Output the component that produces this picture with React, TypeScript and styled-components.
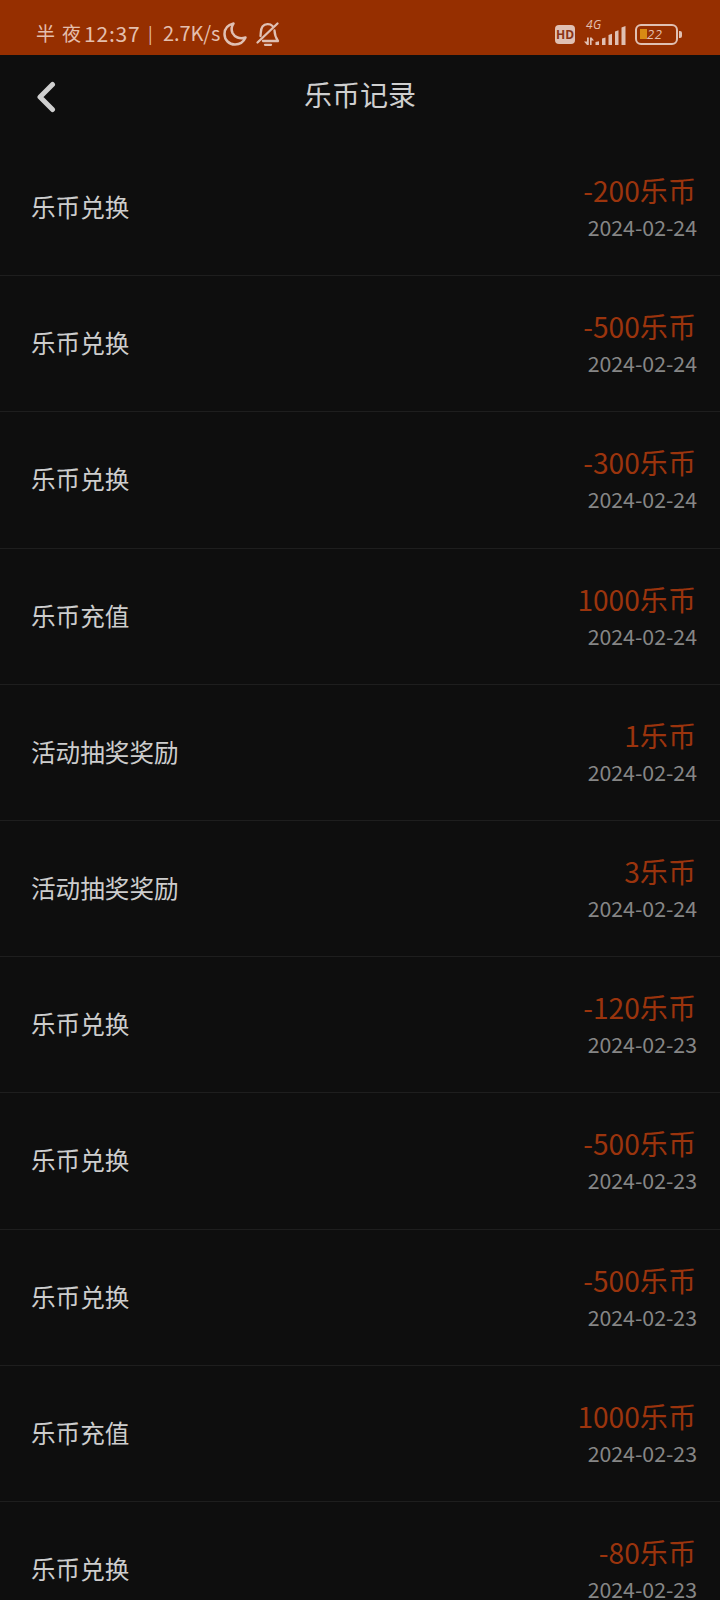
import React from 'react';
import styled, { createGlobalStyle } from 'styled-components';

const GlobalStyle = createGlobalStyle`
  * { box-sizing: border-box; }
  body {
    margin: 0;
    background: #0e0e0e;
    font-family: "Noto Sans CJK SC", sans-serif;
  }
`;

const Screen = styled.div`
  width: 720px;
  height: 1600px;
  overflow: hidden;
  background: #0e0e0e;
`;

const StatusBar = styled.header`
  display: flex;
  justify-content: space-between;
  height: 55px;
  padding: 13px 38px 0 36px;
  background: #962f00;
  color: #e4bfae;
`;

const StatusGroup = styled.div<{ $gap?: number }>`
  display: flex;
  align-items: center;
  gap: ${({ $gap = 0 }) => $gap}px;
  height: 42px;
`;

const StatusText = styled.span<{ $width: number; $size?: number; $spacing?: number }>`
  width: ${({ $width }) => $width}px;
  font-size: ${({ $size = 20 }) => $size}px;
  letter-spacing: ${({ $spacing = 0 }) => $spacing}px;
  line-height: 40px;
  height: 42px;
  white-space: nowrap;
  font-weight: 400;
`;

const StatusIcon = styled.svg`
  display: block;
  flex: none;
  overflow: visible;
`;

const HdBadge = styled.span`
  width: 20px;
  height: 19px;
  border-radius: 4px;
  background: #e0c0b3;
  color: #8a3313;
  font: 700 12px/20px "Open Sans", sans-serif;
  text-align: center;
`;

const Signal = styled.div`
  display: flex;
  flex-direction: column;
  width: 42px;
  height: 26px;
  margin-top: -6px;
`;

const NetworkType = styled.span`
  height: 8px;
  padding-left: 2px;
  font: italic 400 12px/14px "Open Sans", sans-serif;
  letter-spacing: 0.5px;
`;

const Battery = styled.div`
  display: flex;
  align-items: center;
`;

const BatteryBody = styled.div`
  display: flex;
  align-items: center;
  width: 43px;
  height: 21px;
  padding-left: 3px;
  border: 2px solid #e0c0b3;
  border-radius: 6px;
`;

const BatteryLevel = styled.i`
  width: 7px;
  height: 10px;
  background: #d88a14;
`;

const BatteryText = styled.span`
  font: italic 400 13px/15px "Open Sans", sans-serif;
  letter-spacing: 0.5px;
`;

const BatteryTip = styled.i`
  width: 3px;
  height: 7px;
  margin-left: 1px;
  border-radius: 0 2px 2px 0;
  background: #e0c0b3;
`;

const TitleBar = styled.div`
  display: grid;
  grid-template-columns: 72px 1fr 72px;
  align-items: center;
  height: 85px;
  padding-bottom: 8px;
`;

const BackButton = styled.button`
  display: flex;
  padding: 7px 0 0 36px;
  border: 0;
  background: none;
`;

const Title = styled.h1`
  margin: 0;
  color: #cfcfcf;
  font-size: 28px;
  line-height: 40px;
  font-weight: 400;
  text-align: center;
`;

const RecordList = styled.ul`
  margin: 0;
  padding: 0;
  list-style: none;
`;

const RecordRow = styled.li`
  display: flex;
  align-items: center;
  justify-content: space-between;
  height: 136.2px;
  padding: 0 23px 0 31px;
  border-bottom: 1px solid #1e1e1e;
`;

const RecordName = styled.span`
  padding-bottom: 3px;
  color: #cdcdcd;
  font-size: 24.6px;
  line-height: 36px;
`;

const RecordDetail = styled.div`
  display: flex;
  flex-direction: column;
  align-items: flex-end;
  padding-top: 1px;
`;

const Amount = styled.span`
  padding-right: 1px;
  color: #9b340d;
  font-size: 28.1px;
  line-height: 38px;
`;

const RecordDate = styled.time`
  color: #868686;
  font-size: 21.3px;
  line-height: 36px;
`;

const records: [string, string, string][] = [
  ['乐币兑换', '-200', '2024-02-24'],
  ['乐币兑换', '-500', '2024-02-24'],
  ['乐币兑换', '-300', '2024-02-24'],
  ['乐币充值', '1000', '2024-02-24'],
  ['活动抽奖奖励', '1', '2024-02-24'],
  ['活动抽奖奖励', '3', '2024-02-24'],
  ['乐币兑换', '-120', '2024-02-23'],
  ['乐币兑换', '-500', '2024-02-23'],
  ['乐币兑换', '-500', '2024-02-23'],
  ['乐币充值', '1000', '2024-02-23'],
  ['乐币兑换', '-80', '2024-02-23'],
];

const MoonIcon = () => (
  <StatusIcon width="24" height="24" viewBox="0 0 24 24" fill="none" stroke="#e0c0b3" strokeWidth="2.5" strokeLinejoin="round">
    <path d="M10.5 1.5C4.5 3 1.5 7 1.5 12c0 6 4.5 10.5 10.5 10.5 4.500 0 8.500-2.500 10.500-7-6 2-11-.5-13-4.500-1.500-3.500-.8-7 1-9.500Z" />
  </StatusIcon>
);

const MutedBellIcon = () => (
  <StatusIcon width="24" height="25" viewBox="0 0 24 25" fill="none" stroke="#e0c0b3" strokeWidth="2.3" strokeLinecap="round" strokeLinejoin="round">
    <path d="M16.500 4C14 1.500 9 1.500 6.500 4.500 4.500 7 5 10 4.500 14" />
    <path d="M18.500 8.500c.2 4.500 1 7 3.500 10.500H7" />
    <path d="M21.500 1.500 1.500 20.500" />
    <path d="M9 22.800h6" />
  </StatusIcon>
);

const SignalBars = () => (
  <StatusIcon width="42" height="21" viewBox="0 0 42 21" fill="#e0c0b3">
    <path d="M3 11.500h1.800V19H3l-3-3.500h3ZM6 19v-7.500h1.600l2.400 3H7.600V19Z" />
    <path d="m11.500 16 3.500-.8V19h-3.500ZM18 12.500l3.500-1V19H18ZM24.500 9l3.500-1.200V19h-3.500ZM31 5.500l3.500-1.200V19H31ZM37.500 1.500 41.500 0v19h-4Z" />
  </StatusIcon>
);

export default function App() {
  return (
    <>
      <GlobalStyle />
      <Screen>
        <StatusBar>
          <StatusGroup>
            <StatusText $width={48} $size={19} $spacing={7}>半夜</StatusText>
            <StatusText $width={64} $size={21} $spacing={0.8}>12:37</StatusText>
            <StatusText $width={15} $size={17}>|</StatusText>
            <StatusText $width={60} $size={20} $spacing={-0.1}>2.7K/s</StatusText>
            <StatusGroup $gap={9}>
              <MoonIcon />
              <MutedBellIcon />
            </StatusGroup>
          </StatusGroup>
          <StatusGroup $gap={9}>
            <HdBadge>HD</HdBadge>
            <Signal>
              <NetworkType>4G</NetworkType>
              <SignalBars />
            </Signal>
            <Battery>
              <BatteryBody>
                <BatteryLevel />
                <BatteryText>22</BatteryText>
              </BatteryBody>
              <BatteryTip />
            </Battery>
          </StatusGroup>
        </StatusBar>
        <TitleBar>
          <BackButton aria-label="返回">
            <svg width="20" height="32" viewBox="0 0 20 32" fill="none" stroke="#cfcfcf" strokeWidth="5" strokeLinecap="round" strokeLinejoin="round">
              <path d="M16.500 3.500 4 16l12.500 12.500" />
            </svg>
          </BackButton>
          <Title>乐币记录</Title>
        </TitleBar>
        <RecordList>
          {records.map(([name, amount, date], index) => (
            <RecordRow key={index}>
              <RecordName>{name}</RecordName>
              <RecordDetail>
                <Amount>{amount}乐币</Amount>
                <RecordDate>{date}</RecordDate>
              </RecordDetail>
            </RecordRow>
          ))}
        </RecordList>
      </Screen>
    </>
  );
}
